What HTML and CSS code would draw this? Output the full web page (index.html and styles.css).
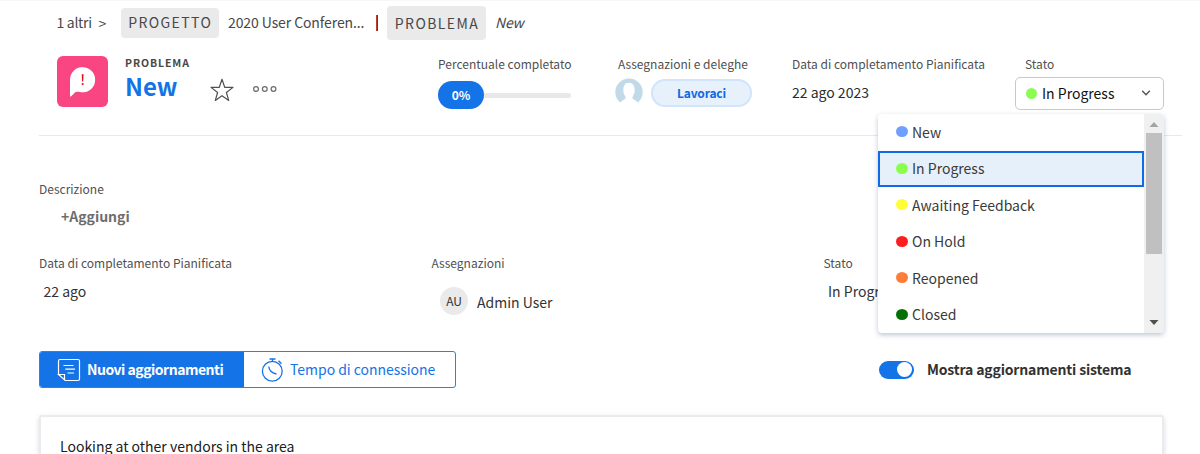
FILE: index.html
```html
<!DOCTYPE html>
<html lang="it">
<head>
<meta charset="utf-8">
<title>New</title>
<link rel="stylesheet" href="styles.css">
</head>
<body>
<nav class="crumbs">
  <span class="crumb-more">1 altri</span>
  <span class="crumb-arrow">&gt;</span>
  <span class="tag">PROGETTO</span>
  <span class="crumb-project">2020 User Conferen...</span>
  <span class="crumb-bar"></span>
  <span class="tag tag-large">PROBLEMA</span>
  <em class="crumb-current">New</em>
</nav>

<header class="header">
  <div class="object-icon">
    <svg width="51" height="51" viewBox="0 0 51 51"><path d="M13 40V24A12.600 12.600 0 1 1 22 35.800Q20 35.400 18.500 36L14.200 40.200Q13 41 13 40Z" fill="#fff"/><path d="M24.700 18.200h1.900l-.4 7.300h-1.100z" fill="#e1121c"/><circle cx="25.650" cy="28" r="1.100" fill="#e1121c"/></svg>
  </div>
  <div class="title">
    <span class="title-kind">PROBLEMA</span>
    <span class="title-name">New</span>
  </div>
  <svg class="star" width="24" height="24" viewBox="0 0 24 24"><path d="M12 1.200L14.700 9.300 23 9.400 16.400 14.500 18.700 22.400 12 17.700 5.300 22.400 7.600 14.500 1 9.400 9.300 9.300Z" fill="none" stroke="#505050" stroke-width="1.200" stroke-linejoin="round"/></svg>
  <svg class="dots" width="26" height="8" viewBox="0 0 26 8" fill="none" stroke="#6b6b6b" stroke-width="1.200"><circle cx="4" cy="4" r="2.400"/><circle cx="12.800" cy="4" r="2.400"/><circle cx="21.500" cy="4" r="2.400"/></svg>

  <div class="metric metric-percent">
    <span class="label">Percentuale completato</span>
    <div class="progress"><span class="progress-pill">0%</span><span class="progress-track"></span></div>
  </div>
  <div class="metric metric-assign">
    <span class="label">Assegnazioni e deleghe</span>
    <div class="assign-row">
      <svg width="28" height="28" viewBox="0 0 28 28"><path d="M5 24.500A13.700 13.700 0 1 1 23 24.500C21.500 23 19.500 22 18 21C17 20 17.500 18.500 18.500 17C20.500 13.500 20.500 4.800 14 4.800S7.500 13.500 9.500 17C10.500 18.500 11 20 10 21C8.500 22 6.500 23 5 24.500Z" fill="#c0daea"/></svg>
      <button class="work-button">Lavoraci</button>
    </div>
  </div>
  <div class="metric metric-date">
    <span class="label">Data di completamento Pianificata</span>
    <span class="date-value">22 ago 2023</span>
  </div>
  <div class="metric metric-status">
    <span class="label status-label">Stato</span>
    <div class="select">
      <i class="dot green"></i><span class="select-value">In Progress</span>
      <svg class="chevron" width="10" height="8" viewBox="0 0 10 8"><path d="M1.200 1.800L5 5.700L8.800 1.800" fill="none" stroke="#505050" stroke-width="1.300"/></svg>
      <div class="menu">
        <ul class="options">
          <li class="option"><i class="dot blue"></i>New</li>
          <li class="option selected"><i class="dot green"></i>In Progress</li>
          <li class="option"><i class="dot yellow"></i>Awaiting Feedback</li>
          <li class="option"><i class="dot red"></i>On Hold</li>
          <li class="option"><i class="dot orange"></i>Reopened</li>
          <li class="option"><i class="dot dark"></i>Closed</li>
        </ul>
        <div class="scrollbar">
          <svg width="10" height="5" viewBox="0 0 10 5"><path d="M0.500 5L5 0L9.500 5Z" fill="#a3a3a3"/></svg>
          <span class="thumb"></span>
          <svg width="10" height="5" viewBox="0 0 10 5"><path d="M0.500 0L5 5L9.500 0Z" fill="#505050"/></svg>
        </div>
      </div>
    </div>
  </div>
</header>

<main class="content">
  <section class="description">
    <span class="field-label">Descrizione</span>
    <span class="add">+Aggiungi</span>
  </section>
  <section class="fields">
    <div class="field"><span class="field-label">Data di completamento Pianificata</span><span class="field-value">22 ago</span></div>
    <div class="field"><span class="field-label">Assegnazioni</span><div class="person"><span class="initials">AU</span><span class="person-name">Admin User</span></div></div>
    <div class="field"><span class="field-label">Stato</span><span class="field-value">In Progress</span></div>
  </section>
  <section class="toolbar">
    <div class="tabs">
      <div class="tab active">
        <svg width="24" height="24" viewBox="0 0 24 24" fill="none" stroke="#fff" stroke-width="1.200"><path d="M1.500 16.500V3Q1.500 1.500 3 1.500H21Q22.500 1.500 22.500 3V21Q22.500 22.500 21 22.500H8.200L1.500 16.500H7.500V22"/><path d="M6.500 7.500H16.500M8.300 11.200H18M10.500 15H17"/></svg>
        <span class="tab-new">Nuovi aggiornamenti</span>
      </div>
      <div class="tab">
        <svg width="24" height="26" viewBox="0 0 24 26" fill="none" stroke="#1473e6" stroke-width="1.300"><circle cx="11.300" cy="14.200" r="9.900"/><path d="M8.500 2H14.500M11.500 2V4.500M17.500 3.800L20.500 6.800M7.800 9.500C8 14 10.500 15.800 15.500 17"/></svg>
        <span class="tab-time">Tempo di connessione</span>
      </div>
    </div>
    <div class="system"><span class="switch"></span><span class="system-label">Mostra aggiornamenti sistema</span></div>
  </section>
  <article class="card">Looking at other vendors in the area</article>
</main>
</body>
</html>
```

FILE: styles.css
```css
* { box-sizing: border-box; }
body {
  margin: 0;
  width: 1200px;
  height: 454px;
  overflow: hidden;
  background: #fff;
  color: #323232;
  font: 14px/20px "Noto Sans CJK SC", "Open Sans", sans-serif;
  white-space: nowrap;
}
svg { display: block; flex: none; }

.crumbs { display: flex; align-items: center; height: 44px; padding-left: 56.500px; border-top: 1px solid #f7f7f7; color: #484848; }
.crumbs > * { flex: none; }
.crumb-more { width: 42px; padding-bottom: 1px; letter-spacing: -.3px; }
.crumb-arrow { width: 22px; }
.tag { display: flex; align-items: center; justify-content: center; width: 98.500px; height: 30px; padding: 0 0 1px 1px; background: #eaeaea; border-radius: 4px; letter-spacing: 1.400px; }
.tag-large { width: 99px; height: 34px; padding-bottom: 0; }
.crumb-project { width: 157px; padding: 0 0 2px 9px; letter-spacing: -.1px; }
.crumb-bar { width: 2px; height: 16px; margin-right: 9px; background: linear-gradient(90deg, #b8402c 50%, #33455f 50%); }
.crumb-current { padding: 0 0 1px 9px; letter-spacing: -.2px; }

.header { display: flex; width: 1143px; height: 92px; margin-left: 39px; padding: 12px 0 0 18px; border-bottom: 1px solid #e8e8e8; }
.object-icon { width: 51px; height: 51px; background: #f94682; border-radius: 6px; }
.title { display: flex; flex-direction: column; width: 84px; padding-left: 17px; }
.title-kind { height: 14px; line-height: 13px; font-size: 10.500px; font-weight: 700; letter-spacing: .9px; color: #484848; }
.title-name { font-size: 24px; line-height: 32px; font-weight: 700; color: #1473e6; }
.star { margin: 22px 0 0 18px; }
.dots { margin: 29px 0 0 18px; }
.metric { display: flex; flex-direction: column; }
.label { height: 16px; line-height: 15px; font-size: 12px; color: #505050; }
.metric-percent { width: 177px; margin-left: 160px; }
.progress { display: flex; align-items: center; margin-top: 9px; }
.progress-pill { width: 46px; height: 28px; border-radius: 14px; background: #1473e6; color: #fff; font-size: 12px; font-weight: 700; line-height: 28px; text-align: center; }
.progress-track { width: 87px; height: 5px; background: #e8e8e8; border-radius: 0 3px 3px 0; }
.metric-assign { width: 177px; }
.metric-assign .label { padding-left: 3px; }
.assign-row { display: flex; gap: 8px; margin-top: 6px; }
.work-button { width: 101px; height: 28px; margin-top: 1px; padding: 0; border: 2px solid #d2e4fa; border-radius: 14px; background: #e7f1fc; color: #1268e4; font: 700 12px/22px "Noto Sans CJK SC", sans-serif; letter-spacing: -.15px; }
.metric-date { width: 223px; }
.date-value { margin-top: 10px; color: #2c2c2c; }
.metric-status { width: 149px; }
.status-label { padding-left: 10px; }
.select { position: relative; display: flex; align-items: center; width: 149px; height: 33px; margin-top: 5px; padding-left: 10px; border: 1.500px solid #c8c8c8; border-radius: 5px; color: #111; }
.dot { flex: none; width: 12px; height: 12px; border-radius: 50%; }
.select .dot { width: 11px; height: 11px; margin-right: 5px; }
.select .option .dot { width: 12px; margin: 0 4px 0 0; }
.select-value { flex: 1; padding-bottom: 2px; }
.chevron { margin: 0 12px 2px 0; }
.menu { position: absolute; left: -138px; top: 36px; z-index: 2; display: flex; width: 286px; height: 219px; overflow: hidden; background: #fff; border-radius: 4px; box-shadow: 0 2px 5px rgba(40, 70, 110, .3); color: #3a3a3a; }
.options { flex: 1; margin: 0; padding: 0; list-style: none; }
.option { display: flex; align-items: center; height: 36.500px; padding: 0 0 1px 18px; }
.selected { padding-left: 16px; border: 2px solid #0f6be6; background: #e6f0fb; }
.blue { background: #6f9fff; }
.green { background: #8bfd4e; }
.yellow { background: #fffd38; }
.red { background: #fd1d1d; }
.orange { background: #ff7d38; }
.dark { background: #067006; }
.scrollbar { display: flex; flex-direction: column; align-items: center; justify-content: space-between; width: 20px; padding: 8px 1px 8px 0; background: #f0f0f0; }
.thumb { width: 16px; height: 121px; margin: 6px 0 auto; background: #c0c0c0; }

.content { margin: 0 36px 0 39px; padding-top: 44px; }
.field-label { font-size: 12px; line-height: 17px; height: 16px; color: #505050; }
.description { display: flex; flex-direction: column; height: 74px; }
.add { padding: 9px 0 0 22px; line-height: 22px; font-weight: 700; color: #6e6e6e; }
.fields { display: grid; grid-template-columns: 392.500px 392px 1fr; height: 97px; }
.field { display: flex; flex-direction: column; }
.field-value { padding: 11px 0 0 4.500px; }
.person { display: flex; align-items: center; gap: 9px; padding: 17px 0 0 8.500px; }
.initials { width: 28px; height: 28px; border-radius: 50%; background: #eaeaea; font-size: 12px; line-height: 28px; text-align: center; }
.person-name { padding-top: 1px; }
.toolbar { display: flex; align-items: center; justify-content: space-between; height: 37px; }
.tabs { display: flex; width: 417px; height: 37px; overflow: hidden; border: 1px solid #2d80ea; border-radius: 3px; color: #1473e6; }
.tab { display: flex; align-items: center; flex: 1; gap: 6px; padding-left: 17px; }
.tab-new, .tab-time, .system-label { padding-bottom: 1px; }
.tab-time { margin-left: -1px; letter-spacing: -.03px; }
.active { flex: none; width: 204px; background: #1473e6; color: #fff; font-weight: 700; letter-spacing: -.5px; }
.system { display: flex; align-items: center; gap: 13px; width: 285px; }
.switch { display: flex; justify-content: flex-end; align-items: center; width: 35px; height: 18px; padding-right: 2px; border-radius: 9px; background: #1473e6; }
.switch::after { content: ""; width: 15px; height: 15px; border-radius: 50%; background: #fff; }
.system-label { font-weight: 700; letter-spacing: -.16px; }
.card { width: 1125px; height: 39px; margin-top: 27px; padding: 21px 19px 0; border: 2px solid #ebebeb; border-bottom: 0; border-radius: 3px 3px 0 0; box-shadow: 0 2px 5px rgba(40, 70, 110, .2); color: #202020; line-height: 16px; }
```
